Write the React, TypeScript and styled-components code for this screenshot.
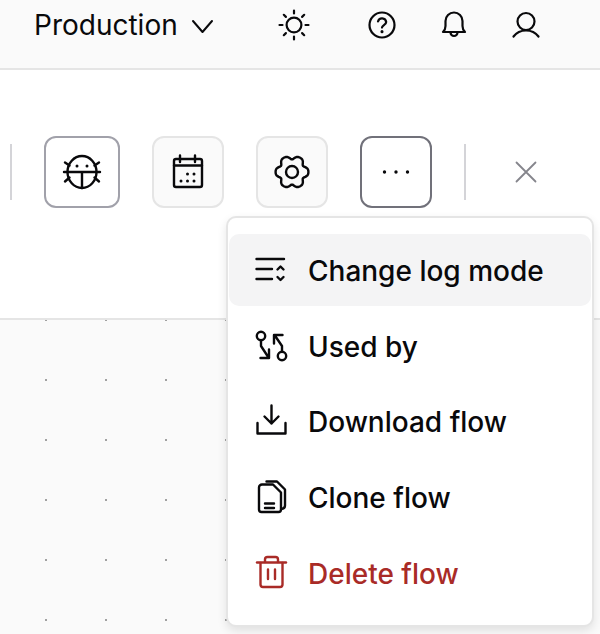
import React from 'react'
import styled, { createGlobalStyle } from 'styled-components'

const GlobalStyle = createGlobalStyle`
    html, body {
        margin: 0;
        padding: 0;
        background-color: #fafafa;
        font-family: "Inter", "Liberation Sans", sans-serif;
        color: #09090b;
    }
`
const Page = styled.div`
    position: relative;
    width: 600px;
    height: 634px;
    overflow: hidden;
    display: flex;
    flex-direction: column;
`
const Header = styled.header`
    box-sizing: border-box;
    height: 70px;
    flex-shrink: 0;
    display: flex;
    align-items: flex-start;
    padding: 7px 56px 0 34px;
    background-color: #fafafa;
    border-bottom: 2px solid #e5e5e5;
`
const EnvSelect = styled.div`
    display: flex;
    align-items: center;
    gap: 13px;
    height: 36px;
    font-size: 28px;
    font-weight: 400;
`
const HeaderActions = styled.div`
    margin-left: auto;
    display: flex;
    gap: 36px;
`
const SunWrap = styled.span`
    display: flex;
    margin-right: 16px;
`
const Toolbar = styled.div`
    box-sizing: border-box;
    height: 250px;
    flex-shrink: 0;
    display: flex;
    align-items: flex-start;
    gap: 32px;
    padding: 66px 0 0 10px;
    background-color: #ffffff;
    border-bottom: 2px solid #e5e5e5;
`
const Separator = styled.div`
    width: 2px;
    height: 56px;
    margin-top: 8px;
    background-color: #d4d4d8;
`
const ToolButton = styled.div<{ $variant: 'muted' | 'outlined' | 'active'; $wide?: boolean }>`
    box-sizing: border-box;
    width: ${p => (p.$wide ? '76px' : '72px')};
    height: 72px;
    display: flex;
    align-items: center;
    justify-content: center;
    border-radius: 12px;
    border: 2px solid ${p => (p.$variant === 'muted' ? '#e5e5e5' : p.$variant === 'outlined' ? '#a1a1aa' : '#71717a')};
    background-color: ${p => (p.$variant === 'muted' ? '#fafafa' : '#ffffff')};
`
const CloseButton = styled.div`
    width: 56px;
    height: 72px;
    display: flex;
    align-items: center;
    justify-content: center;
`
const Canvas = styled.div`
    flex: 1;
    background-color: #fafafa;
    background-image: radial-gradient(circle at center, #a1a1a1 1.1px, transparent 1.2px);
    background-size: 60px 60px;
    background-position: 16px -30px;
`
const Menu = styled.div`
    position: absolute;
    left: 226px;
    top: 216px;
    box-sizing: border-box;
    width: 368px;
    height: 411px;
    padding: 16px 1px;
    display: flex;
    flex-direction: column;
    gap: 4px;
    background-color: #ffffff;
    border: 2px solid #e5e5e5;
    border-radius: 10px;
    box-shadow: 0 4px 10px rgba(0, 0, 0, 0.1);
`
const MenuItem = styled.div<{ $active?: boolean; $danger?: boolean }>`
    height: 72px;
    display: flex;
    align-items: center;
    gap: 19px;
    padding-left: 24px;
    border-radius: 10px;
    font-size: 28px;
    font-weight: 450;
    background-color: ${p => (p.$active ? '#f4f4f5' : 'transparent')};
    color: ${p => (p.$danger ? '#a92b27' : '#09090b')};
`
const MenuLabel = styled.span`
    margin-top: 2px;
`
const Icon = styled.svg<{ $stroke?: number }>`
    display: block;
    flex-shrink: 0;
    fill: none;
    stroke: currentColor;
    stroke-width: ${p => p.$stroke ?? 2.4};
    stroke-linecap: round;
    stroke-linejoin: round;
`
const CloseIcon = styled(Icon)`
    color: #85858c;
`

// six lobed gear outline around the centre of a 40 box
const gearPath = () => {
    const points: string[] = []
    for (let deg = 0; deg < 360; deg += 4) {
        const a = (deg * Math.PI) / 180
        const r = 14.9 + 1.9 * Math.cos(6 * a) - 0.4 * Math.cos(12 * a)
        points.push(`${(20 + r * Math.cos(a)).toFixed(2)} ${(20 + r * Math.sin(a)).toFixed(2)}`)
    }
    return `M${points.join('L')}Z`
}

const Svg = ({ size = 36, stroke, children }: { size?: number; stroke?: number; children: React.ReactNode }) => (
    <Icon $stroke={stroke} width={size} height={size} viewBox={`0 0 ${size} ${size}`}>{children}</Icon>
)

const menuItems = [
    {
        label: 'Change log mode',
        active: true,
        icon: <>
            <path d="M3.5 7H31M3.5 17H19M3.5 27H19" />
            <path d="M24.5 17.5L27.5 14.5L30.5 17.5M24.5 25L27.5 28L30.5 25" />
        </>,
    },
    {
        label: 'Used by',
        icon: <>
            <circle cx="8" cy="8" r="4.2" />
            <circle cx="29" cy="28" r="4.2" />
            <path d="M8 12.5V18L15.5 29.5M16 21.5V30H7.5" />
            <path d="M29 23.5V18L21.5 7M21 15.5V7H29.5" />
        </>,
    },
    {
        label: 'Download flow',
        icon: <>
            <path d="M18.5 2.5V20.5M11.5 13.5L18.5 20.5L25.5 13.5" />
            <path d="M4.5 20V30.5H32.5V20" />
        </>,
    },
    {
        label: 'Clone flow',
        icon: <>
            <path d="M9 5.5H20L28 13.5V30.5A2.5 2.5 0 0 1 25.5 33H8.5A2.5 2.5 0 0 1 6 30.5V8.5A3 3 0 0 1 9 5.5Z" />
            <path d="M13.5 2.5H24L32 10.5V26.5Q32 29.5 28.5 30" />
            <path d="M12 24.5H21M12 29H21" />
        </>,
    },
    {
        label: 'Delete flow',
        danger: true,
        icon: <>
            <path d="M4 7.5H33" />
            <path d="M12 7V4.5A2.5 2.5 0 0 1 14.5 2H22.5A2.5 2.5 0 0 1 25 4.5V7" />
            <path d="M7.5 8V29.5A2.5 2.5 0 0 0 10 32H27A2.5 2.5 0 0 0 29.5 29.5V8" />
            <path d="M15 14.5V24M22 14.5V24" />
        </>,
    },
]

function App() {
    return (
        <Page>
            <GlobalStyle />
            <Header>
                <EnvSelect>
                    Production
                    <Icon $stroke={2} width="24" height="24" viewBox="0 0 24 24">
                        <path d="M2 8L11.5 19L21 8" />
                    </Icon>
                </EnvSelect>
                <HeaderActions>
                    <SunWrap>
                        <Svg stroke={2.2}>
                            <circle cx="18" cy="18" r="7.4" />
                            <path d="M18 3.5V6.5M18 29.5V32.5M3.5 18H6.5M29.5 18H32.5M7.8 7.8L9.9 9.9M26.1 26.1L28.2 28.2M7.8 28.2L9.9 26.1M26.1 9.9L28.2 7.8" />
                        </Svg>
                    </SunWrap>
                    <Svg stroke={2.2}>
                        <circle cx="18" cy="18" r="12.5" />
                        <path d="M14 14.5A4.2 4.2 0 0 1 22.2 15C22.2 18 18 18.2 18 20.6" />
                        <path d="M18 24.6V24.7" strokeWidth="3" />
                    </Svg>
                    <Svg stroke={2.2}>
                        <path d="M7 25Q9.5 22.5 9.5 19V14A8.5 8.5 0 0 1 26.5 14V19Q26.5 22.5 29 25Z" />
                        <path d="M14.5 25.5A3.5 3.5 0 0 0 21.5 25.5" />
                    </Svg>
                    <Svg stroke={2.2}>
                        <circle cx="18" cy="14.5" r="8.5" />
                        <path d="M5.5 29.5Q10 23.5 18 23.5Q26 23.5 30.5 29.5" />
                    </Svg>
                </HeaderActions>
            </Header>
            <Toolbar>
                <Separator />
                <ToolButton $variant="outlined" $wide>
                    <Svg size={40}>
                        <ellipse cx="20" cy="20" rx="14.5" ry="16" />
                        <path d="M2 20H38M20 20V36" />
                        <path d="M3 10.5L7.5 13.5M37 10.5L32.5 13.5M3 29.5L7.5 25.5M37 29.5L32.5 25.5" />
                        <path d="M15 14V14.1M25 14V14.1" strokeWidth="3" />
                    </Svg>
                </ToolButton>
                <ToolButton $variant="muted">
                    <Svg size={40}>
                        <rect x="6" y="7" width="28" height="28" rx="2" />
                        <path d="M6 13.5H34M12 3.5V10M27 3.5V10" />
                        <path d="M19.5 22V22.1M26 22V22.1M13 29V29.1M19.5 29V29.1M26 29V29.1" strokeWidth="3" />
                    </Svg>
                </ToolButton>
                <ToolButton $variant="muted">
                    <Svg size={40}>
                        <path d={gearPath()} />
                        <circle cx="20" cy="20" r="6" />
                    </Svg>
                </ToolButton>
                <ToolButton $variant="active">
                    <Svg size={40}>
                        <path d="M8.5 20V20.1M20 20V20.1M31.5 20V20.1" strokeWidth="3.4" />
                    </Svg>
                </ToolButton>
                <Separator />
                <CloseButton>
                    <CloseIcon $stroke={1.8} width="24" height="24" viewBox="0 0 24 24">
                        <path d="M2.5 2.5L21.5 21.5M21.5 2.5L2.5 21.5" />
                    </CloseIcon>
                </CloseButton>
            </Toolbar>
            <Canvas />
            <Menu>
                {menuItems.map(item => (
                    <MenuItem key={item.label} $active={item.active} $danger={item.danger}>
                        <Svg>{item.icon}</Svg>
                        <MenuLabel>{item.label}</MenuLabel>
                    </MenuItem>
                ))}
            </Menu>
        </Page>
    )
}

export default App
